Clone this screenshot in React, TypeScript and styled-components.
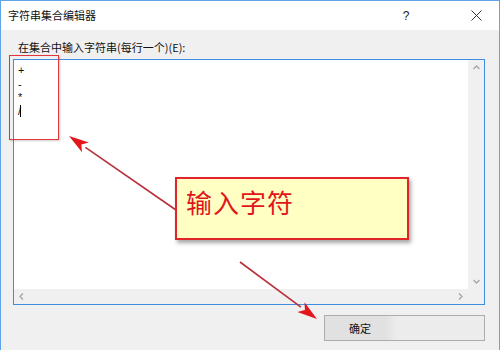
import React from 'react';
import styled, { createGlobalStyle } from 'styled-components';

const GlobalStyle = createGlobalStyle`
  html, body {
    margin: 0;
    padding: 0;
    background: #ffffff;
  }
  body {
    font-family: "Noto Sans CJK SC", "Noto Sans", sans-serif;
    font-size: 11px;
    color: #000;
  }
`;

const Window = styled.div`
  position: relative;
  width: 500px;
  height: 350px;
  box-sizing: border-box;
  border-left: 1px solid #5ea4e6;
  border-right: 1px solid #5ea4e6;
  display: flex;
  flex-direction: column;
  overflow: hidden;
`;

const TitleBar = styled.div`
  height: 29px;
  background: #ffffff;
  display: flex;
  align-items: center;
  padding: 0 0 0 7px;
  border-top: 1px solid #5ea4e6;
`;

const Title = styled.span`
  flex: 1;
  font-size: 11px;
  color: #111;
  margin-top: -2px;
`;

const TitleButton = styled.div<{ $gap?: number }>`
  width: 46px;
  height: 28px;
  margin-right: ${({ $gap }) => $gap ?? 0}px;
  display: flex;
  align-items: center;
  justify-content: center;
  color: #222;
  font-family: "Liberation Sans", sans-serif;
  font-size: 12px;
`;

const Body = styled.div`
  flex: 1;
  background: #f0f0f0;
  display: flex;
  flex-direction: column;
  padding: 10px 14px 0 12px;
`;

const Label = styled.div`
  font-size: 11px;
  color: #111;
  margin: 0 0 5px 5px;
  line-height: 14px;
`;

const TextBox = styled.div`
  height: 246px;
  box-sizing: border-box;
  border: 1px solid #3d8ee0;
  background: #ffffff;
  display: grid;
  grid-template-columns: 1fr 16px;
  grid-template-rows: 1fr 15px;
`;

const Lines = styled.div`
  padding: 4px 0 0 4px;
  font-family: "Liberation Sans", sans-serif;
  font-size: 11px;
  line-height: 13.5px;
  color: #111;
`;

const Line = styled.div`
  height: 13.5px;
  display: flex;
  align-items: center;
`;

const Caret = styled.span`
  display: inline-block;
  width: 1px;
  height: 12px;
  background: #000;
  margin-left: -1px;
`;

const ScrollTrack = styled.div<{ $vertical?: boolean }>`
  background: #f0f0f0;
  display: flex;
  flex-direction: ${({ $vertical }) => ($vertical ? 'column' : 'row')};
  justify-content: space-between;
  align-items: center;
`;

const ScrollCorner = styled.div`
  background: #f0f0f0;
`;

const ArrowBtn = styled.div`
  width: 15px;
  height: 15px;
  display: flex;
  align-items: center;
  justify-content: center;
`;

const ButtonRow = styled.div`
  display: flex;
  justify-content: flex-end;
  margin-top: 10px;
`;

const OkButton = styled.button`
  width: 161px;
  height: 26px;
  box-sizing: border-box;
  border: 1px solid #adadad;
  background: linear-gradient(to right, #e1e1e1 0%, #e1e1e1 38%, #ececec 45%, #ececec 100%);
  font-family: "Noto Sans CJK SC", sans-serif;
  font-size: 11px;
  color: #111;
  text-align: left;
  padding: 0 0 0 24px;
`;

const Highlight = styled.div`
  position: absolute;
  left: 8px;
  top: 55px;
  width: 48px;
  height: 83px;
  border: 1.5px solid #e0353d;
  box-shadow: 1px 1px 2px rgba(0, 0, 0, 0.2);
  pointer-events: none;
`;

const Callout = styled.div`
  position: absolute;
  left: 174px;
  top: 177px;
  width: 234px;
  height: 63px;
  box-sizing: border-box;
  background: #ffffc4;
  border: 2px solid #e0242a;
  box-shadow: 2px 3px 4px rgba(0, 0, 0, 0.35);
  padding: 6px 0 0 9px;
  font-family: "Noto Sans CJK SC", serif;
  font-size: 26px;
  line-height: 34px;
  color: #e0161c;
  letter-spacing: 1px;
`;

const Annotations = styled.svg`
  position: absolute;
  left: 0;
  top: 0;
  pointer-events: none;
`;

const Chevron: React.FC<{ dir: 'up' | 'down' | 'left' | 'right' }> = ({ dir }) => {
  const rot = { up: 0, right: 90, down: 180, left: 270 }[dir];
  return (
    <svg width="9" height="9" viewBox="0 0 9 9">
      <path d="M1.5 6 L4.5 3 L7.5 6" fill="none" stroke="#a6a6a6" strokeWidth="1.3" transform={`rotate(${rot} 4.5 4.5)`} />
    </svg>
  );
};

const Arrow: React.FC<{ x1: number; y1: number; x2: number; y2: number }> = ({ x1, y1, x2, y2 }) => {
  const ang = Math.atan2(y2 - y1, x2 - x1);
  const len = 20;
  const half = 6;
  const bx = x2 - Math.cos(ang) * len;
  const by = y2 - Math.sin(ang) * len;
  const px = -Math.sin(ang) * half;
  const py = Math.cos(ang) * half;
  return (
    <g>
      <line x1={x1} y1={y1} x2={bx} y2={by} stroke="#b8303c" strokeWidth="1.6" />
      <polygon
        points={`${x2},${y2} ${bx + px},${by + py} ${bx + (x2 - bx) * 0.25},${by + (y2 - by) * 0.25} ${bx - px},${by - py}`}
        fill="#e3161c"
      />
    </g>
  );
};

export default function App() {
  return (
    <>
      <GlobalStyle />
      <Window>
        <TitleBar>
          <Title>字符串集合编辑器</Title>
          <TitleButton $gap={24}>?</TitleButton>
          <TitleButton>
            <svg width="11" height="11" viewBox="0 0 11 11">
              <path d="M0.5 0.5 L10.5 10.5 M10.5 0.5 L0.5 10.5" stroke="#333" strokeWidth="1" />
            </svg>
          </TitleButton>
        </TitleBar>
        <Body>
          <Label>在集合中输入字符串(每行一个)(E):</Label>
          <TextBox>
            <Lines>
              <Line>+</Line>
              <Line>-</Line>
              <Line>*</Line>
              <Line>
                /<Caret />
              </Line>
            </Lines>
            <ScrollTrack $vertical>
              <ArrowBtn><Chevron dir="up" /></ArrowBtn>
              <ArrowBtn><Chevron dir="down" /></ArrowBtn>
            </ScrollTrack>
            <ScrollTrack>
              <ArrowBtn><Chevron dir="left" /></ArrowBtn>
              <ArrowBtn><Chevron dir="right" /></ArrowBtn>
            </ScrollTrack>
            <ScrollCorner />
          </TextBox>
          <ButtonRow>
            <OkButton>确定</OkButton>
          </ButtonRow>
        </Body>
        <Highlight />
        <Annotations width="500" height="350" viewBox="0 0 500 350">
          <Arrow x1={175} y1={210} x2={68} y2={136} />
          <Arrow x1={239} y1={262} x2={316} y2={319} />
        </Annotations>
        <Callout>输入字符</Callout>
      </Window>
    </>
  );
}
